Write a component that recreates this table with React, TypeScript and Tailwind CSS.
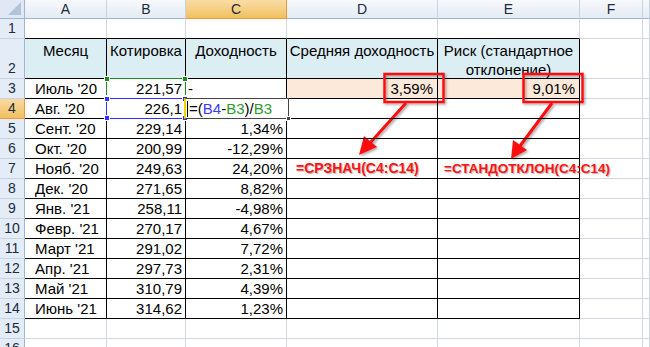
import type { ReactNode } from 'react'

const COLS = ['A', 'B', 'C', 'D', 'E', 'F', '']

type Row = { n: number; cells: ReactNode[] }

const months: [string, string, string][] = [
  ['Сент. \'20', '229,14', '1,34%'],
  ['Окт. \'20', '200,99', '-12,29%'],
  ['Нояб. \'20', '249,63', '24,20%'],
  ['Дек. \'20', '271,65', '8,82%'],
  ['Янв. \'21', '258,11', '-4,98%'],
  ['Февр. \'21', '270,17', '4,67%'],
  ['Март \'21', '291,02', '7,72%'],
  ['Апр. \'21', '297,73', '2,31%'],
  ['Май \'21', '310,79', '4,39%'],
  ['Июнь \'21', '314,62', '1,23%'],
]

const inTable = (r: number, c: number) => r >= 2 && r <= 14 && c >= 0 && c <= 4

function Cell({ r, c, className = '', children }: { r: number; c: number; className?: string; children?: ReactNode }) {
  const right = inTable(r, c) || inTable(r, c + 1) ? 'border-r-black' : 'border-r-[#d0d7e5]'
  const bottom = inTable(r, c) || inTable(r + 1, c) ? 'border-b-black' : 'border-b-[#d0d7e5]'
  return (
    <div className={`relative border-r border-b ${right} ${bottom} whitespace-nowrap text-[15px] leading-[19px] text-black ${className}`}>
      {children}
    </div>
  )
}

function RowHead({ n, active }: { n: number; active?: boolean }) {
  return (
    <div
      className={`flex items-end justify-center pb-[1px] border-r border-b text-[14px] leading-[18px] text-[#1b2a3d] ${
        active
          ? 'bg-gradient-to-b from-[#f9d99f] to-[#f1c15f] border-r-[#f29536] border-b-[#f29536]'
          : 'bg-[#e4ecf7] border-r-[#9eb6ce] border-b-[#c5d3e3]'
      }`}
    >
      {n}
    </div>
  )
}

function Handle({ className }: { className: string }) {
  return <div className={`absolute w-[6px] h-[6px] border border-white ${className}`} />
}

// coloured range outline that Excel draws round a referenced cell
function RangeMark({ color }: { color: 'green' | 'blue' }) {
  const border = color === 'green' ? 'border-[#1c8a1c]' : 'border-[#3030ff]'
  const fill = color === 'green' ? 'bg-[#1c8a1c]' : 'bg-[#3030ff]'
  return (
    <div className={`absolute -inset-[1px] border-[1.5px] z-20 ${border}`}>
      <Handle className={`-left-[3px] -top-[3px] ${fill}`} />
      <Handle className={`-right-[3px] -top-[3px] ${fill}`} />
      <Handle className={`-left-[3px] -bottom-[3px] ${fill}`} />
      <Handle className={`-right-[3px] -bottom-[3px] ${fill}`} />
    </div>
  )
}

function Editor() {
  return (
    <div className="absolute -left-[2px] -top-[1px] -bottom-[1px] -right-[3px] z-30 bg-white border border-[#444] border-l-2 border-l-[#f2d200] flex items-center pl-[1px]">
      <span className="border-l border-black h-[16px] mr-[1px]" />
      =(<span className="text-[#3b3bff]">B4</span>-<span className="text-[#2f9a2f]">B3</span>)/<span className="text-[#2f9a2f]">B3</span>
      <div className="absolute -right-[3px] -bottom-[3px] w-[5px] h-[5px] bg-[#444] border border-white" />
    </div>
  )
}

const redText = 'font-bold text-[#ff1414] [text-shadow:1px_1px_1px_rgba(0,0,0,0.3)]'

function Row({ row }: { row: Row }) {
  const r = row.n
  const c = row.cells
  const header = r === 2
  const base = header ? 'bg-[#daeef3] text-center pt-[2px] leading-[18px]' : 'flex items-center'
  return (
    <>
      <RowHead n={r} active={r === 4} />
      <Cell r={r} c={0} className={header ? base : `${base} pl-[10px]`}>{c[0]}</Cell>
      <Cell r={r} c={1} className={header ? base : `${base} justify-end pr-[3px]`}>
        {c[1]}
        {r === 3 && <RangeMark color="green" />}
        {r === 4 && <RangeMark color="blue" />}
      </Cell>
      <Cell r={r} c={2} className={header ? base : r === 3 ? `${base} pl-[2px]` : `${base} justify-end pr-[3px]`}>
        {r === 4 ? <Editor /> : c[2]}
      </Cell>
      <Cell r={r} c={3} className={header ? `${base} overflow-hidden` : r === 3 ? `${base} justify-end pr-[4px] bg-[#fde9d9]` : `${base} z-10`}>
        {r === 7 ? <span className={`pl-[9px] text-[14px] ${redText}`}>=СРЗНАЧ(С4:С14)</span> : c[3]}
      </Cell>
      <Cell r={r} c={4} className={header ? `${base} overflow-hidden px-[2px]` : r === 3 ? `${base} justify-end pr-[4px] bg-[#fde9d9]` : `${base} z-10`}>
        {r === 7 ? <span className={`pl-[6px] text-[13.5px] ${redText}`}>=СТАНДОТКЛОН(С4:С14)</span> : c[4]}
      </Cell>
      <Cell r={r} c={5} />
      <Cell r={r} c={6} />
    </>
  )
}

export default function App() {
  const rows: Row[] = [
    { n: 1, cells: [] },
    {
      n: 2,
      cells: [
        <span>Месяц</span>,
        <span>Котировка</span>,
        <span>Доходность</span>,
        <span>Средняя доходность</span>,
        <span className="whitespace-normal">Риск (стандартное отклонение)</span>,
      ],
    },
    { n: 3, cells: ['Июль \'20', '221,57', '-', '3,59%', '9,01%'] },
    { n: 4, cells: ['Авг. \'20', '226,1', ''] },
    ...months.map((m, i) => ({ n: i + 5, cells: [m[0], m[1], m[2]] as ReactNode[] })),
    { n: 15, cells: [] },
    { n: 16, cells: [] },
  ]

  return (
    <div className="w-[650px] h-[347px] overflow-hidden bg-white font-['Liberation_Sans',Arial,sans-serif] relative">
      <div className="grid grid-cols-[25px_82px_79px_101px_151px_142px_63px_1fr] grid-rows-[19px_20px_40px_repeat(14,20px)]">
        <div className="relative bg-[#dfe8f4] border-r border-b border-[#9eb6ce] flex items-end justify-end p-[3px]">
          <div className="w-0 h-0 border-l-[13px] border-l-transparent border-b-[13px] border-b-[#b4c4d8]" />
        </div>
        {COLS.map((c, i) => (
          <div
            key={i}
            className={`flex items-center justify-center border-r border-b text-[14px] text-[#1b2a3d] ${
              c === 'C'
                ? 'bg-gradient-to-b from-[#f9dca6] to-[#f1c15f] border-r-[#f29536] border-b-[#f29536]'
                : 'bg-gradient-to-b from-[#f7f9fc] to-[#e4ebf4] border-r-[#c5d3e3] border-b-[#9eb6ce]'
            }`}
          >
            {c}
          </div>
        ))}

        {rows.map((row) => (
          <Row key={row.n} row={row} />
        ))}
      </div>

      {/* callout boxes and arrows */}
      <svg className="absolute left-0 top-0 pointer-events-none" width="650" height="347">
        <defs>
          <filter id="sh" x="-20%" y="-20%" width="140%" height="140%">
            <feDropShadow dx="1.5" dy="1.5" stdDeviation="1" floodColor="#000" floodOpacity="0.35" />
          </filter>
        </defs>
        <g filter="url(#sh)" stroke="#ff1010" fill="none" strokeWidth="2.5">
          <rect x="384.5" y="74" width="59" height="28" />
          <rect x="523.5" y="74" width="59" height="28" />
          <line x1="406" y1="103" x2="370" y2="143" strokeWidth="3" />
          <line x1="552" y1="103" x2="520" y2="146" strokeWidth="3" />
        </g>
        <g filter="url(#sh)" fill="#ff1010">
          <polygon points="359,155 364,136 377,147" />
          <polygon points="511,159 513,140 527,150" />
        </g>
      </svg>
    </div>
  )
}
